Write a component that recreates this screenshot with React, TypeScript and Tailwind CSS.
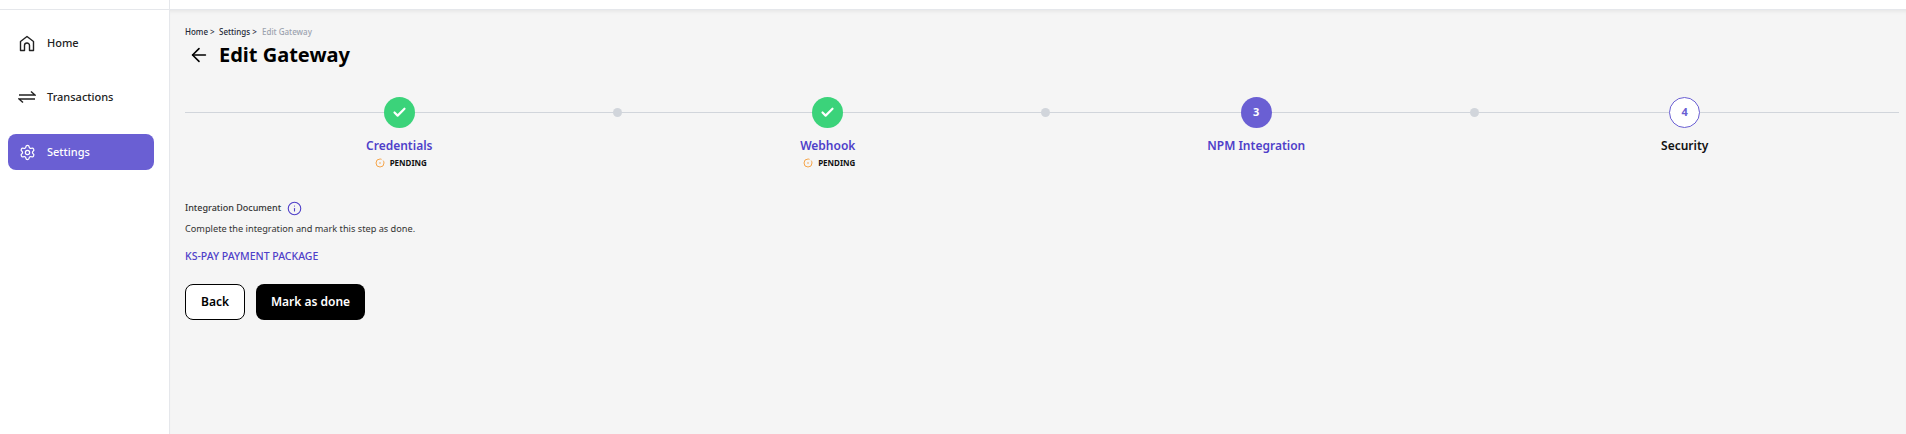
import { ArrowLeft, Check, Info, Settings } from "lucide-react";

const steps = [
  { label: "Credentials", done: true, pending: true, color: "text-[#4f3fc9]" },
  { label: "Webhook", done: true, pending: true, color: "text-[#4f3fc9]" },
  { label: "NPM Integration", number: 3, active: true, color: "text-[#4f3fc9]" },
  { label: "Security", number: 4, color: "text-[#111111]" },
];

function HomeIcon() {
  return (
    <svg width="16" height="17" viewBox="0 0 16 17" fill="none" stroke="currentColor" strokeWidth="1.4" strokeLinejoin="round">
      <path d="M1.5 6.5 8 1.5l6.500 5v9h-4v-5a2.500 2.500 0 0 0-5 0v5h-4z" />
    </svg>
  );
}

function SwapIcon() {
  return (
    <svg width="18" height="14" viewBox="0 0 18 14" fill="none" stroke="currentColor" strokeWidth="1.5">
      <path d="M1 5h16l-4-3.500" />
      <path d="M17 9H1l4 3.500" />
    </svg>
  );
}

function PendingIcon() {
  return (
    <svg width="10" height="10" viewBox="0 0 10 10" fill="none" stroke="#f5a54a" strokeWidth="1">
      <circle cx="5" cy="5" r="4" strokeDasharray="20 2" />
      <circle cx="5" cy="5" r="0.8" fill="#f5a54a" stroke="none" />
    </svg>
  );
}

function NavItem({ label, icon, active }: { label: string; icon: React.ReactNode; active?: boolean }) {
  return (
    <div
      className={
        active
          ? "mt-px flex h-9 items-center gap-2 rounded-lg bg-[#6a5fd3] pl-[7px] text-white"
          : "flex h-9 items-center gap-2 pl-[7px] text-[#222222]"
      }
    >
      <span className="flex w-[24px] justify-center">{icon}</span>
      <span className="text-[11px] font-medium">{label}</span>
    </div>
  );
}

function Step({ step, last }: { step: (typeof steps)[number]; last: boolean }) {
  return (
    <div className="relative flex flex-col items-center">
      {step.done && (
        <div className="z-10 flex h-[31px] w-[31px] items-center justify-center rounded-full bg-[#3bd37a] text-white">
          <Check size={15} strokeWidth={3.5} />
        </div>
      )}
      {step.active && (
        <div className="z-10 flex h-[31px] w-[31px] items-center justify-center rounded-full bg-[#6a5fd3] text-[11px] font-bold text-white">
          {step.number}
        </div>
      )}
      {!step.done && !step.active && (
        <div className="z-10 flex h-[31px] w-[31px] items-center justify-center rounded-full border border-[#6a5fd3] bg-white text-[11px] font-bold text-[#6a5fd3]">
          {step.number}
        </div>
      )}
      <div className={`mt-[8px] text-[12px] leading-[20px] font-semibold ${step.color}`}>{step.label}</div>
      {step.pending && (
        <div className="flex items-center gap-[5px] pl-[3px]">
          <PendingIcon />
          <span className="text-[8px] leading-[14px] font-bold text-[#111111]">PENDING</span>
        </div>
      )}
      {!last && <div className="absolute top-[11px] right-[-8px] z-10 h-[9px] w-[9px] rounded-full bg-[#d1d5db]" />}
    </div>
  );
}

export default function App() {
  return (
    <div className="flex h-[434px] w-[1906px] flex-col overflow-hidden bg-white font-['Noto_Sans',sans-serif]">
      <div className="flex h-[10px] shrink-0 border-b border-[#e5e7eb]">
        <div className="w-[170px] border-r border-[#e5e7eb]" />
      </div>
      <div className="flex flex-1">
        <aside className="flex w-[170px] shrink-0 flex-col gap-[18px] border-r border-[#e5e7eb] pt-[15px] pr-[15px] pl-[8px]">
          <NavItem label="Home" icon={<HomeIcon />} />
          <NavItem label="Transactions" icon={<SwapIcon />} />
          <NavItem label="Settings" icon={<Settings size={17} strokeWidth={1.75} />} active />
        </aside>
        <main className="flex-1 bg-[#f5f5f5] pt-[16px] pr-[7px] pl-[15px] shadow-[inset_0_4px_4px_-3px_rgba(0,0,0,0.08)]">
          <div className="flex items-center text-[8px] leading-[12px] font-medium">
            <span className="w-[34px] text-[#1f2937]">Home &gt;</span>
            <span className="w-[43px] text-[#1f2937]">Settings &gt;</span>
            <span className="text-[#9ca3af]">Edit Gateway</span>
          </div>
          <div className="mt-[2px] flex h-[30px] items-center">
            <ArrowLeft size={22} strokeWidth={1.75} className="ml-[3px] text-black" />
            <h1 className="ml-[9px] text-[20px] font-bold text-black">Edit Gateway</h1>
          </div>
          <div className="relative mt-[27px] grid grid-cols-4">
            <div className="absolute top-[15px] right-0 left-0 h-px bg-[#d1d5db]" />
            {steps.map((step, i) => (
              <Step key={step.label} step={step} last={i === steps.length - 1} />
            ))}
          </div>
          <div className="mt-[30px] flex items-center gap-[6px]">
            <span className="text-[9px] leading-[16px] font-medium text-[#333333]">Integration Document</span>
            <Info size={15} strokeWidth={1.75} className="text-[#4f3fc9]" />
          </div>
          <p className="mt-[6px] text-[9.2px] leading-[14px] text-[#333333]">Complete the integration and mark this step as done.</p>
          <div className="mt-[12px] text-[10.5px] leading-[16px] font-medium text-[#4f3fc9]">KS-PAY PAYMENT PACKAGE</div>
          <div className="mt-[20px] flex gap-[11px]">
            <button className="h-[36px] w-[60px] rounded-lg border border-black bg-white text-[12px] font-semibold text-black">Back</button>
            <button className="h-[36px] w-[109px] rounded-lg bg-black text-[12px] font-semibold text-white">Mark as done</button>
          </div>
        </main>
      </div>
    </div>
  );
}
